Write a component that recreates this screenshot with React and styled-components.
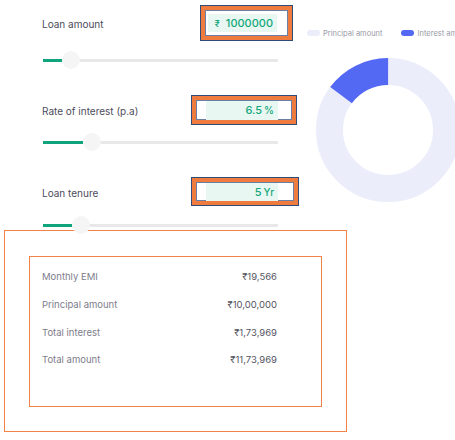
import React from "react";
import styled, { createGlobalStyle } from "styled-components";

const GlobalStyle = createGlobalStyle`
  html, body {
    margin: 0;
    padding: 0;
    background: #ffffff;
    overflow: hidden;
  }
  body {
    font-family: Inter, "Noto Sans", "Liberation Sans", sans-serif;
  }
`;

const principal = 1000000;
const interest = 173969;

const App = () => {
  const total = principal + interest;
  const share = interest / total;
  const r = 58.5;
  const circ = 2 * Math.PI * r;

  return (
    <Page>
      <GlobalStyle />
      <Top>
        <Inputs>
          <Group>
            <Row $h={36}>
              <Label>Loan amount</Label>
              <ValueBox $w={93} $h={36} $pad={4} $right={6}>
                <Field $right={10}>
                  <Green $w={69} $h={18}>
                    <Rupee>₹</Rupee>
                    1000000
                  </Green>
                </Field>
              </ValueBox>
            </Row>
            <Slider $gap={10} $fill={19} $thumb={28}>
              <Track />
              <Fill />
              <Thumb />
            </Slider>
          </Group>

          <Group $top={26}>
            <Row $h={30}>
              <Label>Rate of interest (p.a)</Label>
              <ValueBox $w={106} $h={30} $pad={4} $right={2}>
                <Field $right={13}>
                  <Green $w={72} $h={19}>
                    6.5 <Unit>%</Unit>
                  </Green>
                </Field>
              </ValueBox>
            </Row>
            <Slider $gap={8} $fill={40} $thumb={49}>
              <Track />
              <Fill />
              <Thumb />
            </Slider>
          </Group>

          <Group $top={26}>
            <Row $h={29}>
              <Label>Loan tenure</Label>
              <ValueBox $w={108} $h={29} $pad={4} $right={0}>
                <Field $right={15}>
                  <Green $w={72} $h={18}>
                    5 <Unit>Yr</Unit>
                  </Green>
                </Field>
              </ValueBox>
            </Row>
            <Slider $gap={10} $fill={29} $thumb={38}>
              <Track />
              <Fill />
              <Thumb />
            </Slider>
          </Group>
        </Inputs>

        <ChartCol>
          <Legend>
            <LegendItem>
              <Swatch $color="#ebedfb" />
              Principal amount
            </LegendItem>
            <LegendItem>
              <Swatch $color="#5469f3" />
              Interest amount
            </LegendItem>
          </Legend>
          <Donut width="144" height="144" viewBox="0 0 144 144">
            <circle cx="72" cy="72" r={r} fill="none" stroke="#ebedfb" strokeWidth="27" />
            <circle
              cx="72"
              cy="72"
              r={r}
              fill="none"
              stroke="#5469f3"
              strokeWidth="27"
              strokeDasharray={`${circ * share} ${circ}`}
              transform={`rotate(${-90 - share * 360} 72 72)`}
            />
          </Donut>
        </ChartCol>
      </Top>

      <ResultOuter>
        <ResultCard>
          <ResultRow>
            <ResultLabel>Monthly EMI</ResultLabel>
            <ResultValue>₹19,566</ResultValue>
          </ResultRow>
          <ResultRow>
            <ResultLabel>Principal amount</ResultLabel>
            <ResultValue>₹10,00,000</ResultValue>
          </ResultRow>
          <ResultRow>
            <ResultLabel>Total interest</ResultLabel>
            <ResultValue>₹1,73,969</ResultValue>
          </ResultRow>
          <ResultRow>
            <ResultLabel>Total amount</ResultLabel>
            <ResultValue>₹11,73,969</ResultValue>
          </ResultRow>
        </ResultCard>
      </ResultOuter>
    </Page>
  );
};

export default App;

const Page = styled.div`
  width: 455px;
  height: 440px;
  padding-top: 5px;
  box-sizing: border-box;
  overflow: hidden;
`;

const Top = styled.div`
  display: flex;
  height: 225px;
`;

const Inputs = styled.div`
  width: 300px;
  flex-shrink: 0;
  padding-left: 42px;
  box-sizing: border-box;
`;

const Group = styled.div`
  margin-top: ${({ $top }) => $top || 0}px;
`;

const Row = styled.div`
  display: flex;
  align-items: center;
  justify-content: space-between;
  height: ${({ $h }) => $h}px;
  width: 257px;
`;

const Label = styled.span`
  font-size: 10px;
  color: #4c4c5c;
  padding-top: 2px;
`;

const ValueBox = styled.div`
  box-sizing: border-box;
  width: ${({ $w }) => $w}px;
  height: ${({ $h }) => $h}px;
  margin-right: ${({ $right }) => $right}px;
  padding: ${({ $pad }) => $pad}px;
  background: #ef7b3e;
  border: 1px solid #2f4b78;
  display: flex;
`;

const Field = styled.div`
  flex: 1;
  background: #ffffff;
  border: 1px solid #6b7fa3;
  display: flex;
  align-items: center;
  justify-content: flex-end;
  padding-right: ${({ $right }) => $right}px;
`;

const Green = styled.div`
  box-sizing: border-box;
  flex-shrink: 0;
  width: ${({ $w }) => $w}px;
  height: ${({ $h }) => $h}px;
  background: #e8f7f2;
  display: flex;
  align-items: center;
  justify-content: flex-end;
  padding-right: 4px;
  font-size: 11px;
  font-weight: 500;
  color: #12a67b;
  white-space: nowrap;
`;

const Rupee = styled.span`
  font-size: 9px;
  margin-right: 6px;
`;

const Unit = styled.span`
  font-size: 10px;
  margin-left: 2px;
`;

const Slider = styled.div`
  position: relative;
  margin-top: ${({ $gap }) => $gap}px;
  height: 18px;
  width: 235px;
  margin-left: 1px;

  & > span:nth-child(2) {
    width: ${({ $fill }) => $fill}px;
  }
  & > span:nth-child(3) {
    left: ${({ $thumb }) => $thumb - 9}px;
  }
`;

const Track = styled.span`
  position: absolute;
  left: 0;
  right: 0;
  top: 8px;
  height: 3px;
  background: #e8e8e8;
`;

const Fill = styled.span`
  position: absolute;
  left: 0;
  top: 8px;
  height: 3px;
  background: #10a47c;
`;

const Thumb = styled.span`
  position: absolute;
  top: 0;
  width: 18px;
  height: 18px;
  border-radius: 50%;
  background: #f5f5f6;
`;

const ChartCol = styled.div`
  flex: 1;
  padding-top: 23px;
  min-width: 0;
`;

const Legend = styled.div`
  display: flex;
  gap: 19px;
  margin-left: 7px;
  white-space: nowrap;
  height: 10px;
  align-items: center;
`;

const LegendItem = styled.span`
  display: flex;
  align-items: center;
  gap: 3px;
  font-size: 7.5px;
  color: #9a9aa6;
`;

const Swatch = styled.span`
  width: 13px;
  height: 6px;
  border-radius: 3px;
  background: ${({ $color }) => $color};
`;

const Donut = styled.svg`
  display: block;
  margin-left: 16px;
  margin-top: 20px;
`;

const ResultOuter = styled.div`
  box-sizing: border-box;
  margin-left: 4px;
  width: 343px;
  height: 202px;
  border: 1px solid #f08345;
  padding: 25px 24px 0 24px;
`;

const ResultCard = styled.div`
  box-sizing: border-box;
  width: 293px;
  height: 151px;
  border: 1px solid #f08345;
  padding: 6px 44px 0 12px;
`;

const ResultRow = styled.div`
  display: flex;
  justify-content: space-between;
  align-items: center;
  height: 27.7px;
  font-size: 9.5px;
`;

const ResultLabel = styled.span`
  color: #7d7d8b;
`;

const ResultValue = styled.span`
  color: #55555f;
`;
